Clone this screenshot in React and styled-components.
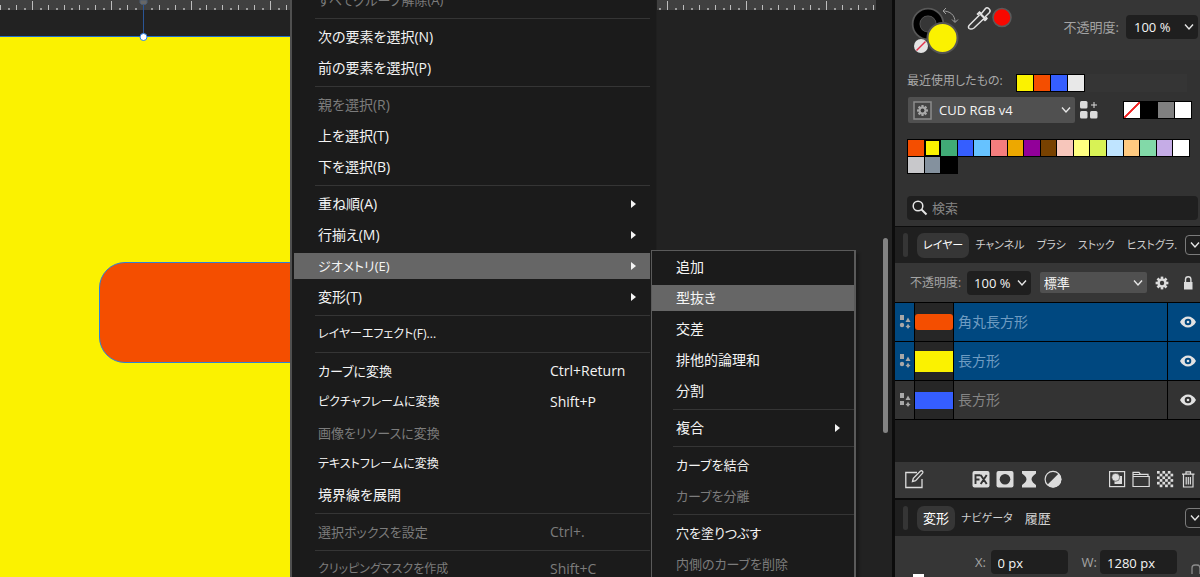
import React from "react";
import styled, { createGlobalStyle, css } from "styled-components";

const GlobalStyle = createGlobalStyle`
  *, *::before, *::after { box-sizing: border-box; }
  html, body { margin: 0; background: #222; overflow: hidden; }
  body, button, input, select {
    font-family: "Open Sans", "Noto Sans CJK JP", sans-serif;
    font-size: 13px;
    line-height: 20px;
    font-feature-settings: "palt";
  }
  button, input, select { margin: 0; border: 0; padding: 0; color: inherit; background: none; }
  ul { list-style: none; margin: 0; padding: 0; }
`;

const Shell = styled.div`
  display: flex;
  height: 100vh;
  overflow: hidden;
  color: #f2f2f2;
`;

/* ---------- canvas ---------- */

const Workspace = styled.main`
  position: relative;
  flex: 1;
  min-width: 0;
  background: #222;
  overflow: hidden;
`;

const Ruler = styled.svg`
  display: block;
  width: calc(100% - 16px);
  height: 10px;
  background: #404040;
`;

const Artboard = styled.div`
  position: absolute;
  left: 0;
  top: 36px;
  bottom: 0;
  width: 500px;
  border-top: 1px solid #1f6fd0;
  background: #fbf200;
`;

const RoundedShape = styled.div`
  position: absolute;
  left: 99px;
  top: 225px;
  width: 360px;
  height: 101px;
  border: 1px solid #2e80d8;
  border-radius: 26px;
  background: #f44e00;
`;

const RotateHandle = styled.svg`
  position: absolute;
  left: 138px;
  top: 0;
  width: 12px;
  height: 42px;
`;

const ScrollThumb = styled.div`
  position: absolute;
  right: 4px;
  top: 238px;
  width: 5px;
  height: 195px;
  border-radius: 3px;
  background: #838383;
`;

/* ---------- menus ---------- */

const MenuList = styled.ul`
  position: absolute;
  display: flex;
  flex-direction: column;
  gap: 5px;
  background: #1b1b1b;
`;

const MainMenu = styled(MenuList)`
  left: 290px;
  top: -13px;
  width: 367px;
  padding: 0 6px 4px 2px;
  border-left: 2px solid #505050;
  border-right: 1px solid #1f1f1f;
`;

const SubMenu = styled(MenuList)`
  left: 357px;
  top: -3px;
  width: 205px;
  padding: 3px 0;
  border: solid #5a5a5a;
  border-width: 1px 2px 1px 1px;
  box-shadow: 3px 3px 3px rgba(0, 0, 0, 0.3);
`;

const MenuEntry = styled.li`
  position: relative;
`;

const MenuButton = styled.button`
  display: flex;
  align-items: center;
  width: 100%;
  height: 26px;
  padding: 0 14px 1px 24px;
  font-size: 14px;
  text-align: left;
  white-space: nowrap;
  color: ${(p) => (p.disabled ? "#7c7c7c" : "#f4f4f4")};
  background: ${(p) => (p.$active ? "#666" : "transparent")};
`;

const MenuLabel = styled.span`
  flex: 1;
  font-size: ${(p) => p.$size}px;
`;

const Shortcut = styled.kbd`
  width: 86px;
  font: inherit;
`;

const Separator = styled.li`
  height: 1px;
  margin-left: 21px;
  background: #353535;
`;

/* ---------- side panel ---------- */

const Panel = styled.aside`
  display: flex;
  flex-direction: column;
  flex: none;
  width: 308px;
  border-left: 3px solid #0c0c0c;
  background: #363636;
  overflow: hidden;
`;

const ColorHeader = styled.section`
  display: flex;
  flex: none;
  height: 60px;
  padding: 0 2px 0 12px;
`;

const ColorWells = styled.svg`
  width: 56px;
  height: 60px;
`;

const Picker = styled.svg`
  width: 54px;
  height: 34px;
`;

const OpacityGroup = styled.div`
  display: flex;
  align-items: center;
  gap: 7px;
  height: 24px;
  margin: 15px 0 0 auto;
`;

const FieldLabel = styled.label`
  color: #a4a4a4;
  font-size: ${(p) => (p.$small ? 12 : 13)}px;
  white-space: nowrap;
`;

const SelectBox = styled.span`
  display: grid;
  align-items: center;
  width: ${(p) => p.$width}px;
  height: ${(p) => p.$height || 24}px;
  border-radius: ${(p) => (p.$light ? 2 : 4)}px;
  background: ${(p) => (p.$light ? "#505050" : "#1f1f1f")};
  > * { grid-area: 1 / 1; }
  > svg { justify-self: end; margin-right: 4px; pointer-events: none; }
  > svg.lead { justify-self: start; margin: 0 0 0 5px; }
`;

const Select = styled.select`
  appearance: none;
  width: 100%;
  height: 100%;
  padding-left: ${(p) => p.$inset}px;
  color: #f4f4f4;
`;

const Swatches = styled.section`
  display: flex;
  flex-direction: column;
  flex: none;
  height: 167px;
  padding: 13px 2px 6px 12px;
  background: #323232;
  border-bottom: 1px solid #0c0c0c;
`;

const RecentRow = styled.div`
  display: flex;
  align-items: center;
  height: 20px;
  color: #a9a9a9;
`;

const RecentLabel = styled.span`
  width: 109px;
  padding-bottom: 5px;
  font-size: 12px;
  white-space: nowrap;
`;

const Strip = styled.div`
  display: flex;
  gap: 1px;
  padding: 1px;
  background: #000;
`;

const Chip = styled.button`
  display: block;
  width: 16px;
  height: 16px;
  background: ${(p) => p.$color};
`;

const RecentTrack = styled.div`
  flex: 1;
  height: 18px;
  margin-right: 11px;
  background: #353535;
`;

const LibraryRow = styled.div`
  display: flex;
  align-items: center;
  gap: 5px;
  height: 26px;
  margin-top: 4px;
  padding: 0 6px 0 1px;
`;

const BasicStrip = styled(Strip)`
  margin-left: auto;
`;

const Palette = styled.div`
  display: grid;
  grid-template-columns: repeat(17, 1fr);
  gap: 1px;
  width: 283px;
  margin-top: 16px;
  padding: 1px;
`;

const PaletteChip = styled.button`
  height: 16px;
  background: ${(p) => p.$color};
  box-shadow: 0 0 0 1px #000${(p) => (p.$selected ? ", inset 0 0 0 1px #000" : "")};
`;

const SearchBox = styled.label`
  display: flex;
  align-items: center;
  gap: 4px;
  height: 24px;
  margin-top: auto;
  padding-left: 5px;
  border-radius: 4px;
  background: #1f1f1f;
`;

const SearchInput = styled.input`
  flex: 1;
  min-width: 0;
  outline: none;
  &::placeholder { color: #858585; opacity: 1; }
`;

const TabBar = styled.nav`
  display: flex;
  align-items: center;
  flex: none;
  height: 36px;
  padding-left: 8px;
  background: #1f1f1f;
`;

const Grip = styled.span`
  flex: none;
  width: 5px;
  height: 24px;
  margin-right: 9px;
  border-radius: 3px;
  background: #353535;
`;

const Tab = styled.button`
  height: 25px;
  padding: 0 6px;
  border-radius: 7px;
  font-size: ${(p) => (p.$kana ? 11 : 13)}px;
  white-space: nowrap;
  color: #d0d0d0;
  ${(p) =>
    p.$active &&
    css`
      background: #363636;
      color: #fff;
    `}
`;

const TabMenuButton = styled.button`
  display: grid;
  place-items: center;
  flex: none;
  width: 20px;
  height: 20px;
  margin: 0 -5px 0 auto;
  border: 1px solid #7b7b7b;
  border-radius: 4px;
`;

const LayerControls = styled.div`
  display: flex;
  align-items: center;
  flex: none;
  height: 39px;
  padding-left: 15px;
`;

const ControlGap = styled.span`
  width: ${(p) => p.$w}px;
`;

const IconButton = styled.button`
  display: grid;
  place-items: center;
  flex: none;
  width: ${(p) => p.$width || 24}px;
  height: 24px;
`;

const LayerList = styled.ul`
  flex: none;
  min-height: 160px;
  border-top: 1px solid #000;
  background: #1f1f1f;
`;

const LayerRow = styled.li`
  display: grid;
  grid-template-columns: 19px 38px 1fr 32px;
  gap: 1px;
  height: 39px;
  border-bottom: 1px solid #000;
  background: #000;
`;

const LayerCell = styled.div`
  display: flex;
  align-items: center;
  padding-left: ${(p) => p.$pad || 0}px;
  font-size: 14px;
  color: ${(p) => (p.$selected ? "#6f9cc2" : "#858585")};
  background: ${(p) => (p.$selected ? "#004880" : "#333")};
`;

const Thumb = styled.div`
  display: flex;
  align-items: center;
  background: #262626;
  &::before {
    content: "";
    width: 38px;
    height: ${(p) => p.$h}px;
    border-radius: ${(p) => p.$round}px;
    background: ${(p) => p.$color};
  }
`;

const LayerTools = styled.div`
  display: flex;
  align-items: center;
  flex: none;
  height: 38px;
  padding: 0 0 2px 7px;
  border-bottom: 2px solid #0c0c0c;
`;

const ToolGroup = styled.div`
  display: flex;
  margin-left: ${(p) => p.$gap || 0}px;
`;

const Transform = styled.section`
  display: flex;
  align-items: flex-start;
  flex: none;
  height: 60px;
  padding: 14px 0 0 18px;
`;

const Anchor = styled.span`
  width: 11px;
  height: 11px;
  margin: 24px 51px 0 0;
  background: #fff;
`;

const NumberField = styled.label`
  display: flex;
  align-items: center;
  justify-content: space-between;
  width: ${(p) => p.$width}px;
  margin-right: 14px;
  color: #a4a4a4;
`;

const NumberInput = styled.input`
  width: 77px;
  height: 24px;
  padding: 2px 7px 0;
  border-radius: 4px;
  background: #1f1f1f;
  color: #f4f4f4;
`;

/* ---------- drawings ---------- */

const Chevron = () => (
  <svg width="10" height="8" viewBox="0 0 10 8" fill="none" stroke="#e6e6e6" strokeWidth="1.4">
    <path d="M1 1.500 5 6 9 1.500" />
  </svg>
);

const Arrow = () => (
  <svg width="5" height="8" viewBox="0 0 5 8" fill="#f4f4f4">
    <path d="M0 0 5 4 0 8z" />
  </svg>
);

const Gear = ({ size = 14, color = "#dcdcdc", ...rest }) => (
  <svg width={size} height={size} viewBox="-7 -7 14 14" {...rest}>
    {[0, 45, 90, 135].map((a) => (
      <rect key={a} x="-1.3" y="-6.4" width="2.6" height="12.8" fill={color} transform={`rotate(${a})`} />
    ))}
    <circle r="3.4" fill="none" stroke={color} strokeWidth="2.4" />
    <circle r="2.2" fill="#383838" />
  </svg>
);

const ShapesIcon = ({ square }) => (
  <svg width="12" height="16" viewBox="0 0 12 16" fill="#a8a8a8">
    <rect x="1" y="1" width="4" height="5" />
    <path d="M6.500 8 9 3.500 11.500 8z" />
    {square ? <rect x="1" y="9" width="4" height="4" /> : <circle cx="3" cy="11" r="2.200" />}
    <path d="M9 9.500 10 11.500 11.500 12.500 10 13.500 9 15 8 13.500 6.500 12.500 8 11.500z" />
  </svg>
);

const Eye = () => (
  <svg width="16" height="12" viewBox="0 0 16 12" fill="#e2e2e2" fillRule="evenodd">
    <path d="M0 6C2 2.400 4.800.5 8 .5s6 1.900 8 5.500c-2 3.600-4.800 5.500-8 5.500S2 9.600 0 6zm8-3.300a3.300 3.300 0 1 0 0 6.600 3.300 3.300 0 0 0 0-6.600z" />
    <circle cx="8" cy="6" r="1.300" />
  </svg>
);

const toolIcons = {
  edit: (
    <g fill="none" stroke="#dcdcdc" strokeWidth="1.300">
      <path d="M12 2.500H.8V17.500H17V9" />
      <path d="M7.500 11.500 8.300 8.300 15.500 1.100a1.500 1.500 0 0 1 2.100 2.100L10.600 10.600z" />
    </g>
  ),
  fx: (
    <g>
      <rect x=".5" y="1" width="17" height="16.500" rx="2" fill="#dcdcdc" />
      <path d="M3.500 14V5.200H8.500M3.500 9.500H7.500M8.700 5l6 9M14.700 5l-6 9" fill="none" stroke="#333" strokeWidth="1.900" />
    </g>
  ),
  mask: (
    <g>
      <rect x=".5" y="1" width="17" height="16.500" rx="2" fill="#dcdcdc" />
      <circle cx="9" cy="9.200" r="5.300" fill="#363636" />
    </g>
  ),
  glass: <path d="M2 1H16V3.500C14 5 11.500 7 11.500 9.200S14 13.500 16 15V17.500H2V15C4 13.500 6.500 11.500 6.500 9.200S4 5 2 3.500z" fill="#dcdcdc" />,
  half: (
    <g>
      <circle cx="9" cy="9.200" r="7.900" fill="none" stroke="#dcdcdc" strokeWidth="1.200" />
      <path d="M14.700 3.500A8 8 0 1 1 3.400 14.800z" fill="#dcdcdc" />
    </g>
  ),
  shape: (
    <g>
      <rect x="1.600" y="1.600" width="15" height="15" fill="none" stroke="#dcdcdc" strokeWidth="1.200" />
      <path d="M8 6H14V14H6.500V9z" fill="#dcdcdc" />
      <circle cx="7.700" cy="7.300" r="4" fill="#dcdcdc" stroke="#363636" strokeWidth=".6" />
    </g>
  ),
  folder: <path d="M1 16.500V2.300H7L8.500 4.300H16V6.500M1 6.500H17.200V16.500H1zM1 4.500H8" fill="none" stroke="#dcdcdc" strokeWidth="1.200" />,
  trash: (
    <g fill="none" stroke="#dcdcdc" strokeWidth="1.200">
      <path d="M3 4.200H15.500M7 4V1.800H11.500V4M4.500 4.500V17H14V4.500M7.200 7V14.500M9.300 7V14.500M11.400 7V14.500" />
    </g>
  ),
};

const Checker = () => (
  <g fill="#dcdcdc">
    {Array.from({ length: 36 }, (_, i) => [i % 6, Math.floor(i / 6)])
      .filter(([x, y]) => (x + y) % 2 === 0)
      .map(([x, y]) => (
        <rect key={`${x}-${y}`} x={1 + x * 2.7} y={1 + y * 2.7} width="2.700" height="2.700" />
      ))}
  </g>
);

const Tool = ({ name, label, width = 24 }) => (
  <IconButton aria-label={label} $width={width}>
    <svg width="18" height="18" viewBox="0 0 18 18" overflow="visible">
      {name === "checker" ? <Checker /> : toolIcons[name]}
    </svg>
  </IconButton>
);

const RulerTicks = () => (
  <Ruler aria-hidden="true">
    {Array.from({ length: 260 }, (_, i) => {
      const x = Math.round((i * 79.4) / 10);
      const y = i % 10 === 4 ? 1 : i % 2 === 0 ? 5 : 8;
      return <rect key={i} x={x} y={y} width={y === 8 ? 2 : 1} height={10 - y} fill={y === 8 ? "#999" : "#bdbdbd"} />;
    })}
  </Ruler>
);

/* ---------- data ---------- */

const geometryMenu = [
  { label: "追加" },
  { label: "型抜き", active: true },
  { label: "交差" },
  { label: "排他的論理和" },
  { label: "分割" },
  null,
  { label: "複合", arrow: true },
  null,
  { label: "カーブを結合", size: 13 },
  { label: "カーブを分離", size: 13, disabled: true },
  null,
  { label: "穴を塗りつぶす", size: 13 },
  { label: "内側のカーブを削除", size: 13, disabled: true },
];

const layerMenu = [
  { label: "すべてグループ解除(A)", size: 13, disabled: true },
  null,
  { label: "次の要素を選択(N)" },
  { label: "前の要素を選択(P)" },
  null,
  { label: "親を選択(R)", disabled: true },
  { label: "上を選択(T)" },
  { label: "下を選択(B)" },
  null,
  { label: "重ね順(A)", arrow: true },
  { label: "行揃え(M)", arrow: true },
  { label: "ジオメトリ(E)", size: 13, arrow: true, active: true, items: geometryMenu },
  { label: "変形(T)", arrow: true },
  null,
  { label: "レイヤーエフェクト(F)...", size: 12 },
  null,
  { label: "カーブに変換", size: 13, shortcut: "Ctrl+Return" },
  { label: "ピクチャフレームに変換", size: 12, shortcut: "Shift+P" },
  { label: "画像をリソースに変換", size: 13, disabled: true },
  { label: "テキストフレームに変換", size: 12 },
  { label: "境界線を展開" },
  null,
  { label: "選択ボックスを設定", size: 13, shortcut: "Ctrl+.", disabled: true },
  null,
  { label: "クリッピングマスクを作成", size: 12, shortcut: "Shift+C", disabled: true },
];

const palette = [
  "#f44e00", "#fbf200", "#40ab76", "#355eff", "#66c2ff", "#f47d7d", "#eda800", "#920099", "#784100",
  "#f7c6bb", "#ffff80", "#d8f255", "#bfe4ff", "#ffca80", "#82d9a8", "#c5ace6", "#ffffff",
  "#c8c8cb", "#84919e", "#000000",
];

const layers = [
  { name: "角丸長方形", color: "#f44e00", h: 16, round: 3, selected: true },
  { name: "長方形", color: "#fbf200", h: 21, round: 0, selected: true },
  { name: "長方形", color: "#355eff", h: 17, round: 0, square: true },
];

const MenuItems = ({ items }) =>
  items.map((item, i) =>
    item === null ? (
      <Separator key={i} role="separator" />
    ) : (
      <MenuEntry key={i} role="none">
        <MenuButton role="menuitem" disabled={item.disabled} $active={item.active}>
          <MenuLabel $size={item.size || 14}>{item.label}</MenuLabel>
          {item.shortcut && <Shortcut>{item.shortcut}</Shortcut>}
          {item.arrow && <Arrow />}
        </MenuButton>
        {item.items && (
          <SubMenu role="menu">
            <MenuItems items={item.items} />
          </SubMenu>
        )}
      </MenuEntry>
    )
  );

export default function App() {
  return (
    <>
      <GlobalStyle />
      <Shell>
        <Workspace>
          <RulerTicks />
          <Artboard>
            <RoundedShape />
          </Artboard>
          <RotateHandle viewBox="0 0 12 42">
            <path d="M2 0H9V3L7.500 4.500H3.500L2 3z" fill="#666" stroke="#4a5a70" />
            <path d="M5.500 5V34" stroke="#2a5596" />
            <circle cx="5.500" cy="37" r="3.500" fill="#fff" stroke="#2a80e8" />
          </RotateHandle>
          <ScrollThumb />
          <MainMenu role="menu">
            <MenuItems items={layerMenu} />
          </MainMenu>
        </Workspace>

        <Panel>
          <ColorHeader>
            <ColorWells viewBox="907 0 56 60">
              <circle cx="928" cy="24" r="12" fill="none" stroke="#585858" strokeWidth="8.500" />
              <circle cx="928" cy="24" r="11.500" fill="none" stroke="#000" strokeWidth="6" />
              <circle cx="942.500" cy="38" r="15" fill="#fbf200" stroke="#555" strokeWidth="2" />
              <circle cx="921" cy="46" r="7" fill="#e4e4e4" />
              <path d="M916.500 50.500 925.500 41.500" stroke="#e0304a" strokeWidth="1.500" />
              <path d="M943 11C950 11 955 15 955 22M946 8 943 11 946 14M952 19.500 955 22.500 958 19.500" fill="none" stroke="#a0a0a0" />
            </ColorWells>
            <Picker viewBox="963 0 54 34">
              <path
                d="M969 28.500C968 27.500 968.500 26 969.500 25L979 15.500 977.500 14 979.500 12 981.500 13.500 985.500 8.500C987.500 6.500 991.500 10 989.500 12.500L985.500 16.500 987 18.500 985 20.500 983.500 19 974 28C972.500 29 970.500 29.500 969 28.500z"
                fill="none"
                stroke="#e2e2e2"
                strokeWidth="1.500"
              />
              <path d="M979 12.500 986.500 20" stroke="#e2e2e2" strokeWidth="2.200" />
              <circle cx="1002" cy="17.500" r="9" fill="#f80800" stroke="#5a5a5a" strokeWidth="1.500" />
            </Picker>
            <OpacityGroup>
              <FieldLabel htmlFor="fill-opacity">不透明度:</FieldLabel>
              <SelectBox $width={72}>
                <Select id="fill-opacity" $inset={8}>
                  <option>100 %</option>
                </Select>
                <Chevron />
              </SelectBox>
            </OpacityGroup>
          </ColorHeader>

          <Swatches>
            <RecentRow>
              <RecentLabel>最近使用したもの:</RecentLabel>
              <Strip>
                {["#fbf200", "#f44e00", "#355eff", "#e8e8e8"].map((c) => (
                  <Chip key={c} $color={c} aria-label={c} />
                ))}
              </Strip>
              <RecentTrack />
            </RecentRow>
            <LibraryRow>
              <SelectBox $width={167} $height={26} $light>
                <Select $inset={31} aria-label="パレット">
                  <option>CUD RGB v4</option>
                </Select>
                <svg className="lead" width="19" height="19" viewBox="-9.500 -9.500 19 19">
                  <rect x="-8.500" y="-8.500" width="17" height="17" fill="#444" stroke="#8c8c8c" strokeWidth="1.500" />
                  <Gear x="-6" y="-6" size={12} color="#a8a8a8" />
                </svg>
                <Chevron />
              </SelectBox>
              <IconButton $width={18} aria-label="表示">
                <svg width="18" height="18" viewBox="0 0 18 18" fill="#dcdcdc">
                  <rect x="0" y="0" width="7.500" height="7.500" rx="1.500" />
                  <rect x="0" y="10" width="7.500" height="7.500" rx="1.500" />
                  <rect x="10" y="10" width="7.500" height="7.500" rx="1.500" />
                  <path d="M14 1V7M11 4H17" stroke="#dcdcdc" />
                </svg>
              </IconButton>
              <BasicStrip>
                <Chip $color="linear-gradient(135deg, #fff 46%, #f02020 47%, #f02020 53%, #fff 54%)" aria-label="なし" />
                <Chip $color="#000" aria-label="黒" />
                <Chip $color="#808080" aria-label="グレー" />
                <Chip $color="#fff" aria-label="白" />
              </BasicStrip>
            </LibraryRow>
            <Palette>
              {palette.map((c, i) => (
                <PaletteChip key={c} $color={c} $selected={i === 1} aria-label={c} />
              ))}
            </Palette>
            <SearchBox>
              <svg width="16" height="16" viewBox="0 0 16 16" fill="none" stroke="#e6e6e6" strokeWidth="1.500">
                <circle cx="6" cy="6" r="4.800" />
                <path d="M9.500 9.500 14.500 14.500" strokeWidth="2" />
              </svg>
              <SearchInput type="search" placeholder="検索" aria-label="検索" />
            </SearchBox>
          </Swatches>

          <TabBar>
            <Grip />
            <Tab $kana $active>レイヤー</Tab>
            <Tab $kana>チャンネル</Tab>
            <Tab $kana>ブラシ</Tab>
            <Tab $kana>ストック</Tab>
            <Tab $kana>ヒストグラ.</Tab>
            <TabMenuButton aria-label="その他のパネル">
              <Chevron />
            </TabMenuButton>
          </TabBar>

          <LayerControls>
            <FieldLabel $small htmlFor="layer-opacity">不透明度:</FieldLabel>
            <ControlGap $w={6} />
            <SelectBox $width={65}>
              <Select id="layer-opacity" $inset={7}>
                <option>100 %</option>
              </Select>
              <Chevron />
            </SelectBox>
            <ControlGap $w={9} />
            <SelectBox $width={109} $height={21} $light>
              <Select $inset={4} aria-label="ブレンドモード">
                <option>標準</option>
              </Select>
              <Chevron />
            </SelectBox>
            <ControlGap $w={3} />
            <IconButton aria-label="ブレンド範囲">
              <Gear />
            </IconButton>
            <ControlGap $w={2} />
            <IconButton aria-label="ロック">
              <svg width="10" height="14" viewBox="0 0 10 14">
                <rect x="1" y="6" width="8.500" height="7.500" fill="#dcdcdc" />
                <path d="M2.500 6V3.500a2.700 2.700 0 0 1 5.400 0V6" fill="none" stroke="#dcdcdc" strokeWidth="1.400" />
              </svg>
            </IconButton>
          </LayerControls>

          <LayerList>
            {layers.map((l, i) => (
              <LayerRow key={i}>
                <LayerCell $selected={l.selected} $pad={4}>
                  <ShapesIcon square={l.square} />
                </LayerCell>
                <Thumb $color={l.color} $h={l.h} $round={l.round} />
                <LayerCell $selected={l.selected} $pad={4}>{l.name}</LayerCell>
                <LayerCell $selected={l.selected}>
                  <IconButton $width={40} aria-label={`${l.name}を表示`}>
                    <Eye />
                  </IconButton>
                </LayerCell>
              </LayerRow>
            ))}
          </LayerList>

          <LayerTools>
            <Tool name="edit" label="編集" />
            <ToolGroup $gap={43}>
              <Tool name="fx" label="レイヤー効果" />
              <Tool name="mask" label="マスク" />
              <Tool name="glass" label="ライブフィルター" />
              <Tool name="half" label="調整" />
            </ToolGroup>
            <ToolGroup $gap={40}>
              <Tool name="shape" label="新規レイヤー" />
              <Tool name="folder" label="グループ" />
              <Tool name="checker" label="ピクセルレイヤー" />
              <Tool name="trash" label="削除" width={22} />
            </ToolGroup>
          </LayerTools>

          <TabBar>
            <Grip />
            <Tab $active>変形</Tab>
            <Tab $kana>ナビゲータ</Tab>
            <Tab>履歴</Tab>
            <TabMenuButton aria-label="その他のパネル">
              <Chevron />
            </TabMenuButton>
          </TabBar>

          <Transform>
            <Anchor />
            <NumberField $width={93}>
              X:
              <NumberInput type="text" defaultValue="0 px" />
            </NumberField>
            <NumberField $width={96}>
              W:
              <NumberInput type="text" defaultValue="1280 px" />
            </NumberField>
            <svg width="9" height="30" viewBox="0 0 9 30" fill="none" stroke="#8c8c8c" strokeWidth="1.300">
              <path d="M1 24V18a3 3 0 0 1 3-3H6a3 3 0 0 1 3 3V24" />
            </svg>
          </Transform>
        </Panel>
      </Shell>
    </>
  );
}
